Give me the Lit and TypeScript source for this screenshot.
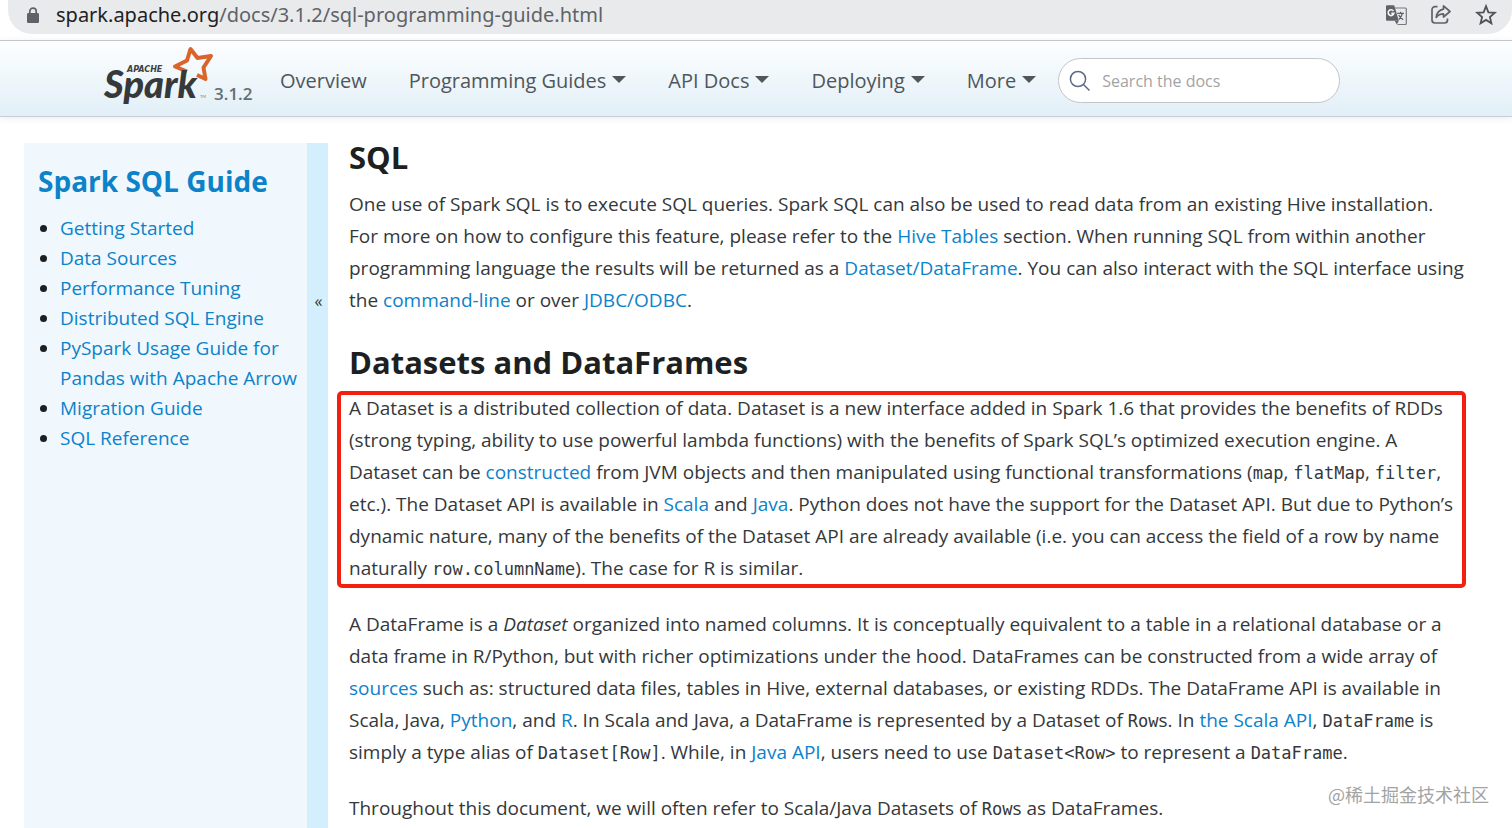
import { LitElement, html, css, svg } from "lit";
import { customElement } from "lit/decorators.js";

const navItems = [
  { label: "Overview", menu: false },
  { label: "Programming Guides", menu: true },
  { label: "API Docs", menu: true },
  { label: "Deploying", menu: true },
  { label: "More", menu: true },
];

const guideLinks = [
  "Getting Started",
  "Data Sources",
  "Performance Tuning",
  "Distributed SQL Engine",
  "PySpark Usage Guide for Pandas with Apache Arrow",
  "Migration Guide",
  "SQL Reference",
];

@customElement("address-bar")
export class AddressBar extends LitElement {
  static styles = css`
    :host {
      display: block;
      background: #fff;
      padding: 0 0 6px 8px;
      border-bottom: 1px solid #c9cccd;
    }
    .bar {
      display: flex;
      align-items: center;
      height: 34px;
      box-sizing: border-box;
      padding: 0 14px 4px 18px;
      border-radius: 0 0 24px 24px;
      background: #e9eaec;
      color: #5f6368;
      font-family: "Noto Sans", "Open Sans", sans-serif;
      font-size: 20px;
      line-height: 28px;
    }
    .lock {
      margin-right: 16px;
      flex: none;
    }
    .url {
      flex: 1;
      white-space: nowrap;
    }
    .host {
      color: #202124;
    }
    .actions {
      display: flex;
      gap: 21px;
    }
    button {
      border: 0;
      padding: 0;
      background: none;
      color: inherit;
      display: flex;
    }
  `;

  render() {
    return html`
      <div class="bar">
        <svg class="lock" width="14" height="16" viewBox="0 0 14 16">
          <path d="M3.8 7V4.4a3.2 3.2 0 0 1 6.4 0V7" fill="none" stroke="#5f6368" stroke-width="1.7" />
          <rect x="1" y="6" width="12" height="10" rx="1.2" fill="#5f6368" />
        </svg>
        <div class="url"><span class="host">spark.apache.org</span>/docs/3.1.2/sql-programming-guide.html</div>
        <div class="actions">
          <button aria-label="Translate this page">
            <svg width="24" height="24" viewBox="0 0 24 24">
              <path d="M11 5h10.300a1 1 0 0 1 1 1v14.500a1 1 0 0 1-1 1H13.500" fill="none" stroke="#76797d" stroke-width="1.200" />
              <path d="M3 2.200h7.200l4.600 15.600H3a1 1 0 0 1-1-1V3.200a1 1 0 0 1 1-1z" fill="#5f6368" />
              <path d="M10.800 17.800h4l-2 3.600z" fill="#5f6368" />
              <path d="M9.400 7.900A2.900 2.900 0 1 0 9.900 10.400H7.300" fill="none" stroke="#f3f4f5" stroke-width="1.600" />
              <path d="M13.200 10.400h6.800M16.600 8.800v1.600M18.400 10.400c-.5 2.400-1.800 4.400-3.600 6M14.800 12c.8 1.900 2.400 3.600 4.400 4.800" fill="none" stroke="#5f6368" stroke-width="1.300" />
            </svg>
          </button>
          <button aria-label="Share this page">
            <svg width="24" height="24" viewBox="0 0 24 24" fill="none" stroke="#5f6368" stroke-width="1.700" stroke-linejoin="round">
              <path d="M8.500 3.600H6a3 3 0 0 0-3 3v10.400a3 3 0 0 0 3 3h9.500a3 3 0 0 0 3-3V15.500" />
              <path d="M14.500 2.800l6.500 5.700-6.500 5.500v-3.200c-3.200 0-5.400.9-7.300 3.600.5-4.600 3-7.400 7.300-8.200z" />
            </svg>
          </button>
          <button aria-label="Bookmark this page">
            <svg width="24" height="24" viewBox="0 0 24 24" fill="none" stroke="#4f5357" stroke-width="1.800">
              <path d="M12 3.200l2.400 6.100 6.400.5-4.900 4.200 1.500 6.300L12 16.900l-5.400 3.400 1.500-6.300L3.200 9.800l6.400-.5z" />
            </svg>
          </button>
        </div>
      </div>
    `;
  }
}

@customElement("site-header")
export class SiteHeader extends LitElement {
  static styles = css`
    :host {
      display: block;
      background: linear-gradient(#fdfeff, #e1eff7);
      border-bottom: 1px solid #c5cfd4;
      box-shadow: 0 1px 8px rgba(0, 0, 0, 0.08);
    }
    nav {
      display: flex;
      align-items: center;
      height: 75px;
      box-sizing: border-box;
      padding: 4px 0 0 102px;
      color: #50565a;
      font-size: 20px;
      line-height: 28px;
    }
    a {
      color: inherit;
      text-decoration: none;
      white-space: nowrap;
    }
    .brand {
      display: flex;
      align-items: flex-end;
      width: 178px;
      height: 70px;
    }
    .version {
      color: #666d72;
      font-size: 17px;
      font-weight: 600;
      line-height: 20px;
      padding-bottom: 12px;
    }
    .items {
      display: flex;
      gap: 42px;
    }
    .caret::after {
      content: "";
      display: inline-block;
      margin-left: 6px;
      vertical-align: 5px;
      border: 7px solid transparent;
      border-top-color: currentColor;
      border-bottom: 0;
    }
    .search {
      display: flex;
      align-items: center;
      gap: 11px;
      box-sizing: border-box;
      width: 282px;
      height: 45px;
      margin-left: 22px;
      padding: 0 11px 0 10px;
      border: 1px solid #c3c6c8;
      border-radius: 23px;
      background: #fff;
    }
    .search svg {
      flex: none;
    }
    input {
      flex: 1;
      min-width: 0;
      border: 0;
      padding: 0;
      outline: 0;
      background: none;
      font: 16px/24px "Open Sans", "Noto Sans", sans-serif;
      color: #444;
    }
    input::placeholder {
      color: #a3a3a3;
      opacity: 1;
    }
  `;

  private logo() {
    return svg`
      <svg width="112" height="70" viewBox="0 0 112 70" role="img" aria-label="Apache Spark">
        <path d="M95 29l8.500 4-2-11.500 7.500-11.500-13.500 2L88.500 3 85 14.500 73 20.500l12 5"
          fill="none" stroke="#d9652b" stroke-width="4" stroke-linejoin="round" />
        <text x="25" y="26" font-size="8" font-weight="700" font-style="italic" font-family="DejaVu Sans, sans-serif" fill="#3c4143">APACHE</text>
        <text x="2" y="52" font-size="38" font-weight="900" font-style="italic" font-family="Lato, sans-serif" fill="#35393b">Spark</text>
        <text x="98" y="52" font-size="4" font-family="Lato, sans-serif" fill="#777">TM</text>
      </svg>`;
  }

  render() {
    return html`
      <nav>
        <a class="brand" href="#">${this.logo()}<span class="version">3.1.2</span></a>
        <div class="items">
          ${navItems.map((item) => html`<a href="#" class=${item.menu ? "caret" : "plain"}>${item.label}</a>`)}
        </div>
        <label class="search">
          <svg width="22" height="22" viewBox="0 0 22 22" fill="none" stroke="#5c6a86" stroke-width="1.500">
            <circle cx="9" cy="9" r="7.600" />
            <path d="M14.500 14.500l6 6" />
          </svg>
          <input type="text" placeholder="Search the docs" aria-label="Search the docs" />
        </label>
      </nav>
    `;
  }
}

@customElement("app-root")
export class AppRoot extends LitElement {
  static styles = css`
    :host {
      display: flex;
      flex-direction: column;
      height: 100vh;
      overflow: hidden;
      background: #fff;
      font-family: "Open Sans", "Noto Sans", sans-serif;
    }
    address-bar,
    site-header {
      flex: none;
    }
    .page {
      display: flex;
      flex: 1;
      min-height: 0;
      padding: 26px 0 0 24px;
    }
    aside {
      display: flex;
      flex: none;
      width: 304px;
      background: #f0f8fe;
    }
    .guide {
      flex: 1;
      padding: 18px 8px 0 14px;
    }
    .guide h3 {
      margin: 0 0 12px;
      font-size: 28px;
      font-weight: 700;
      line-height: 40px;
    }
    ul {
      margin: 0;
      padding-left: 22px;
      color: #1d1f21;
      font-size: 19px;
      line-height: 30px;
    }
    a {
      color: #0c82c9;
      text-decoration: none;
    }
    .toggle {
      display: flex;
      justify-content: center;
      box-sizing: border-box;
      width: 21px;
      padding: 146px 0 0 2px;
      border: 0;
      background: #d3effd;
      color: #333;
      font: 16px/24px "Open Sans", "Noto Sans", sans-serif;
    }
    main {
      flex: 1;
      min-width: 0;
      padding: 0 48px 0 21px;
      color: #34383b;
      font-size: 19px;
      line-height: 32px;
    }
    h2 {
      margin: 0;
      color: #1d1f21;
      font-size: 31px;
      font-weight: 700;
      line-height: 44px;
    }
    .first {
      margin-top: -8px;
      margin-bottom: 9px;
    }
    .second {
      margin-top: 22px;
      margin-bottom: 8px;
    }
    p {
      margin: 0 0 24px;
    }
    code {
      font-family: "DejaVu Sans Mono", monospace;
      font-size: 17px;
      line-height: 20px;
    }
    .marked {
      position: relative;
    }
    .marked::after {
      content: "";
      position: absolute;
      inset: -1px -2px -4px -12px;
      border: 4px solid #f3200f;
      border-radius: 5px;
      pointer-events: none;
    }
    .watermark {
      position: absolute;
      right: 23px;
      bottom: 20px;
      color: #a3a3a3;
      font: 18px/28px "Noto Sans CJK SC", sans-serif;
    }
  `;

  render() {
    return html`
      <address-bar></address-bar>
      <site-header></site-header>
      <div class="page">
        <aside>
          <div class="guide">
            <h3><a href="#">Spark SQL Guide</a></h3>
            <ul>
              ${guideLinks.map((label) => html`<li><a href="#">${label}</a></li>`)}
            </ul>
          </div>
          <button class="toggle" aria-label="Collapse guide menu">«</button>
        </aside>
        <main>
          <h2 class="first">SQL</h2>
          <p>
            One use of Spark SQL is to execute SQL queries. Spark SQL can also be used to read data from an existing
            Hive installation. For more on how to configure this feature, please refer to the
            <a href="#">Hive Tables</a> section. When running SQL from within another programming language the results
            will be returned as a <a href="#">Dataset/DataFrame</a>. You can also interact with the SQL interface using
            the <a href="#">command-line</a> or over <a href="#">JDBC/ODBC</a>.
          </p>
          <h2 class="second">Datasets and DataFrames</h2>
          <p class="marked">
            A Dataset is a distributed collection of data. Dataset is a new interface added in Spark 1.6 that provides
            the benefits of RDDs (strong typing, ability to use powerful lambda functions) with the benefits of Spark
            SQL’s optimized execution engine. A Dataset can be <a href="#">constructed</a> from JVM objects and then
            manipulated using functional transformations (<code>map</code>, <code>flatMap</code>, <code>filter</code>,
            etc.). The Dataset API is available in <a href="#">Scala</a> and <a href="#">Java</a>. Python does not have
            the support for the Dataset API. But due to Python’s dynamic nature, many of the benefits of the Dataset API
            are already available (i.e. you can access the field of a row by name naturally <code>row.columnName</code>).
            The case for R is similar.
          </p>
          <p>
            A DataFrame is a <em>Dataset</em> organized into named columns. It is conceptually equivalent to a table in
            a relational database or a data frame in R/Python, but with richer optimizations under the hood. DataFrames
            can be constructed from a wide array of <a href="#">sources</a> such as: structured data files, tables in
            Hive, external databases, or existing RDDs. The DataFrame API is available in Scala, Java,
            <a href="#">Python</a>, and <a href="#">R</a>. In Scala and Java, a DataFrame is represented by a Dataset of
            <code>Row</code>s. In <a href="#">the Scala API</a>, <code>DataFrame</code> is simply a type alias of
            <code>Dataset[Row]</code>. While, in <a href="#">Java API</a>, users need to use
            <code>Dataset&lt;Row&gt;</code> to represent a <code>DataFrame</code>.
          </p>
          <p>
            Throughout this document, we will often refer to Scala/Java Datasets of <code>Row</code>s as DataFrames.
          </p>
        </main>
      </div>
      <div class="watermark">@稀土掘金技术社区</div>
    `;
  }
}
